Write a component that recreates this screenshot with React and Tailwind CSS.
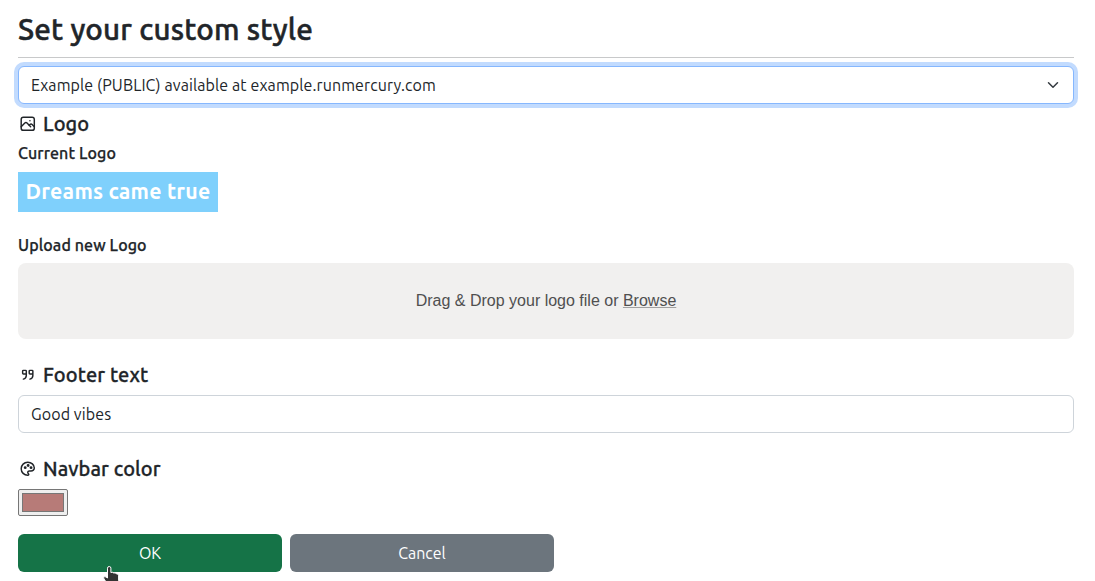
import { TbPhoto, TbQuote, TbPalette } from "react-icons/tb";

function SectionTitle({ icon: Icon, children }) {
  return (
    <h2 className="flex h-6 items-center text-[20px] leading-6 font-medium tracking-[0.1px]">
      <Icon className="ml-[1px] mr-[6.5px] size-[17.5px]" />
      <span className="[-webkit-text-stroke:0.3px_#212529]">{children}</span>
    </h2>
  );
}

export default function App() {
  return (
    <main className="relative h-[581px] overflow-hidden bg-white pt-3 pr-[21px] pl-[18px] font-['Ubuntu','Noto_Sans',sans-serif] text-[#212529]">
      <h1 className="h-[34px] text-[29.6px] leading-[34px] font-medium tracking-[0.18px] whitespace-nowrap [-webkit-text-stroke:0.5px_#212529]">Set your custom style</h1>
      <hr className="mt-[11px] border-t border-[#c8c9ca]" />
      <button className="mt-2 flex h-[38px] w-full items-center justify-between rounded-md border border-[#86b7fe] bg-white pr-[14px] pl-3 text-left text-base tracking-[0.1px] shadow-[0_0_0_4px_#c2dbfe]">
        <span>Example (PUBLIC) available at example.runmercury.com</span>
        <svg className="size-3" viewBox="0 0 16 16" fill="none" stroke="#343a40" strokeWidth="2" strokeLinecap="round" strokeLinejoin="round">
          <path d="m2 5 6 6 6-6" />
        </svg>
      </button>
      <section className="pt-2">
        <SectionTitle icon={TbPhoto}>Logo</SectionTitle>
        <h3 className="mt-[7px] h-5 text-base leading-5 font-medium tracking-[0.1px] [-webkit-text-stroke:0.25px_#212529]">Current Logo</h3>
        <div className="mt-[9px] flex h-10 w-[200px] items-center justify-center bg-[#7fd0fc] text-[21.3px] font-bold tracking-[0.22px] whitespace-nowrap text-white">
          Dreams came true
        </div>
        <h3 className="mt-[23px] h-5 text-base leading-5 font-medium tracking-[0.1px] [-webkit-text-stroke:0.25px_#212529]">Upload new Logo</h3>
        <div className="mt-2 flex h-[76px] items-center justify-center rounded-lg bg-[#f1f0ef] font-['Liberation_Sans',sans-serif] text-base text-[#4f4f4f]">
          <p>Drag &amp; Drop your logo file or <span className="underline decoration-[#a0a0a0] decoration-1">Browse</span></p>
        </div>
      </section>
      <section className="pt-6">
        <SectionTitle icon={TbQuote}>Footer text</SectionTitle>
        <div className="mt-2 flex h-[38px] items-center rounded-md border border-[#ced4da] px-3 text-base tracking-[0.1px]">Good vibes</div>
      </section>
      <section className="pt-6">
        <SectionTitle icon={TbPalette}>Navbar color</SectionTitle>
        <div className="mt-2 h-[27px] w-[50px] rounded-[2px] border border-[#767676] bg-[#efefef] p-[3px]">
          <div className="h-full border border-[#777777] bg-[#b77b78]" />
        </div>
      </section>
      <div className="mt-[18px] flex gap-2 text-base text-white">
        <button className="h-[38px] w-[264px] rounded-md bg-[#157347]">OK</button>
        <button className="h-[38px] w-[264px] rounded-md bg-[#6c757d]">Cancel</button>
      </div>
      <svg className="absolute top-[565px] left-[102px] h-6 w-5" viewBox="0 0 20 24" fill="#343434" stroke="#ffffff" strokeWidth="1">
        <path d="M5.5 10V3.2a1.7 1.7 0 0 1 3.4 0v4.4q1.5-1 2.8.4 1.5-.6 2.6.7 2.3-.2 2.3 2v5L14 21H7l-5-7c-1-2 .4-3 2-2l1.5 1z" />
      </svg>
    </main>
  );
}
